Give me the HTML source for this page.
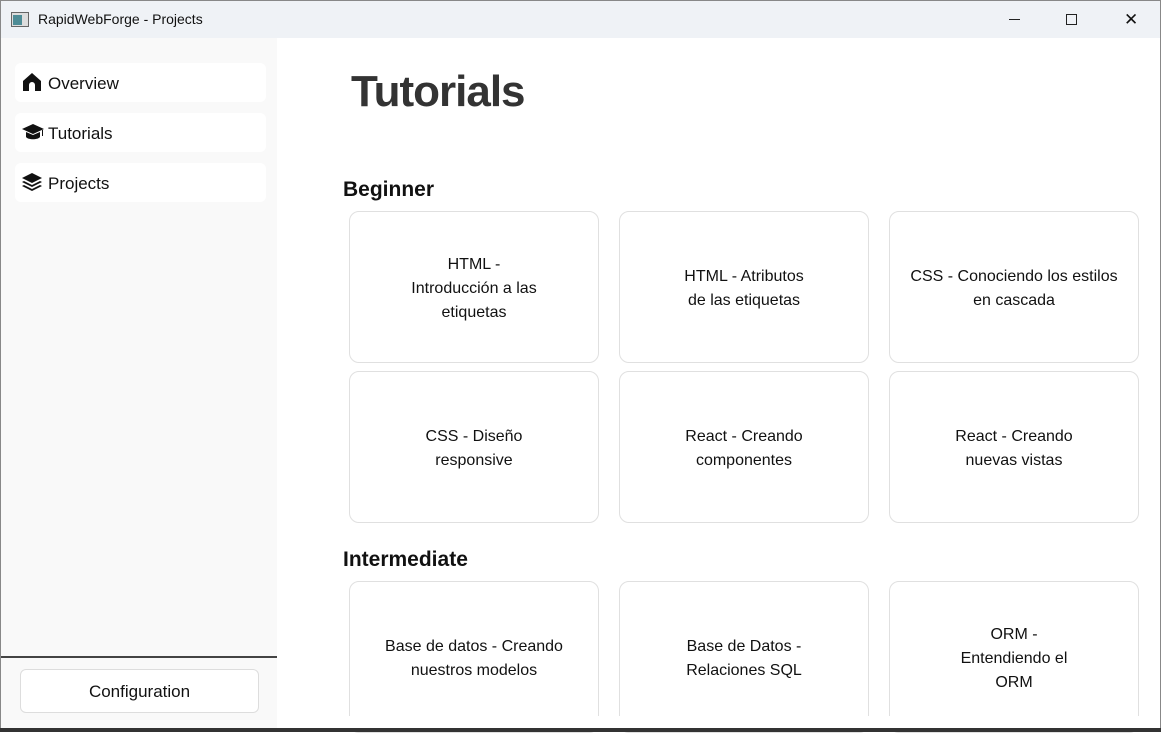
<!DOCTYPE html>
<html><head><style>
*{margin:0;padding:0;box-sizing:border-box}
body{width:1161px;height:732px;overflow:hidden;background:#fff;font-family:"Segoe UI","Liberation Sans",sans-serif;position:relative;color:#111}
.tb{position:absolute;left:0;top:0;width:1161px;height:38px;background:#eff2f6;border-top:1px solid #888;border-left:1px solid #888;border-right:1px solid #888}
.tb .t{position:absolute;left:37px;top:10px;font-size:14px;color:#111}
.sb{position:absolute;left:1px;top:38px;width:276px;height:690px;background:#f9f9f9}
.nav{position:absolute;left:14px;width:251px;height:39px;background:#fff;border-radius:6px;font-size:17px}
.nav span{position:absolute;left:33px;top:11px}
.nav svg{position:absolute;left:7px;top:9px}
.card{position:absolute;width:250px;height:152px;border:1px solid #e0e0e0;border-radius:10px;display:flex;align-items:center;justify-content:center;text-align:center;font-size:16px;line-height:24px;color:#111;padding-top:4px}
h2{position:absolute;font-size:21px;font-weight:bold}
</style></head><body>
<div class="tb">
<svg style="position:absolute;left:10px;top:11px" width="18" height="15"><rect x="0.5" y="0.5" width="17" height="14" fill="#ddd" stroke="#666"/><rect x="2" y="3" width="9" height="10" fill="#4e8c96"/></svg>
<div class="t">RapidWebForge - Projects</div>
<div style="position:absolute;left:1008px;top:18px;width:11px;height:1px;background:#222"></div>
<div style="position:absolute;left:1065px;top:13px;width:11px;height:11px;border:1px solid #222"></div>
<div style="position:absolute;left:1123px;top:12px;font-size:17px;line-height:14px">✕</div>
</div>
<div class="sb">
<div class="nav" style="top:25px"><svg width="20" height="20" viewBox="0 0 20 20"><path d="M10 1L1 9v10h6v-6a3 3 0 0 1 6 0v6h6V9z" fill="#111"/></svg><span>Overview</span></div>
<div class="nav" style="top:75px"><svg width="22" height="20" viewBox="0 0 22 20"><path d="M11 2L0 7l11 5 11-5z M4 10v5c2 3 12 3 14 0v-5l-7 3z M20 8v6h1V8z" fill="#111"/></svg><span>Tutorials</span></div>
<div class="nav" style="top:125px"><svg width="20" height="20" viewBox="0 0 20 20"><path d="M10 1L0 6l10 5 10-5z M2 9L0 10l10 5 10-5-2-1-8 4z M2 13L0 14l10 5 10-5-2-1-8 4z" fill="#111"/></svg><span>Projects</span></div>
<div style="position:absolute;left:0;top:618px;width:276px;height:2px;background:#444"></div>
<div style="position:absolute;left:19px;top:631px;width:239px;height:44px;background:#fff;border:1px solid #ddd;border-radius:6px;text-align:center;line-height:44px;font-size:17px">Configuration</div>
</div>
<div style="position:absolute;left:351px;top:67px;font-size:44px;font-weight:bold;color:#333;letter-spacing:-1px">Tutorials</div>
<h2 style="left:343px;top:178px">Beginner</h2>
<h2 style="left:343px;top:548px">Intermediate</h2>
<div class="card" style="left:349px;top:211px">HTML -<br>Introducción a las<br>etiquetas</div>
<div class="card" style="left:619px;top:211px">HTML - Atributos<br>de las etiquetas</div>
<div class="card" style="left:889px;top:211px">CSS - Conociendo los estilos<br>en cascada</div>
<div class="card" style="left:349px;top:371px">CSS - Diseño<br>responsive</div>
<div class="card" style="left:619px;top:371px">React - Creando<br>componentes</div>
<div class="card" style="left:889px;top:371px">React - Creando<br>nuevas vistas</div>
<div class="card" style="left:349px;top:581px">Base de datos - Creando<br>nuestros modelos</div>
<div class="card" style="left:619px;top:581px">Base de Datos -<br>Relaciones SQL</div>
<div class="card" style="left:889px;top:581px">ORM -<br>Entendiendo el<br>ORM</div>
<div style="position:absolute;left:277px;top:716px;width:884px;height:16px;background:#fff"></div>
<div style="position:absolute;left:0;top:728px;width:1161px;height:4px;background:#333"></div>
<div style="position:absolute;left:0;top:38px;width:1px;height:690px;background:#888"></div>
<div style="position:absolute;left:1160px;top:38px;width:1px;height:690px;background:#888"></div>
</body></html>
